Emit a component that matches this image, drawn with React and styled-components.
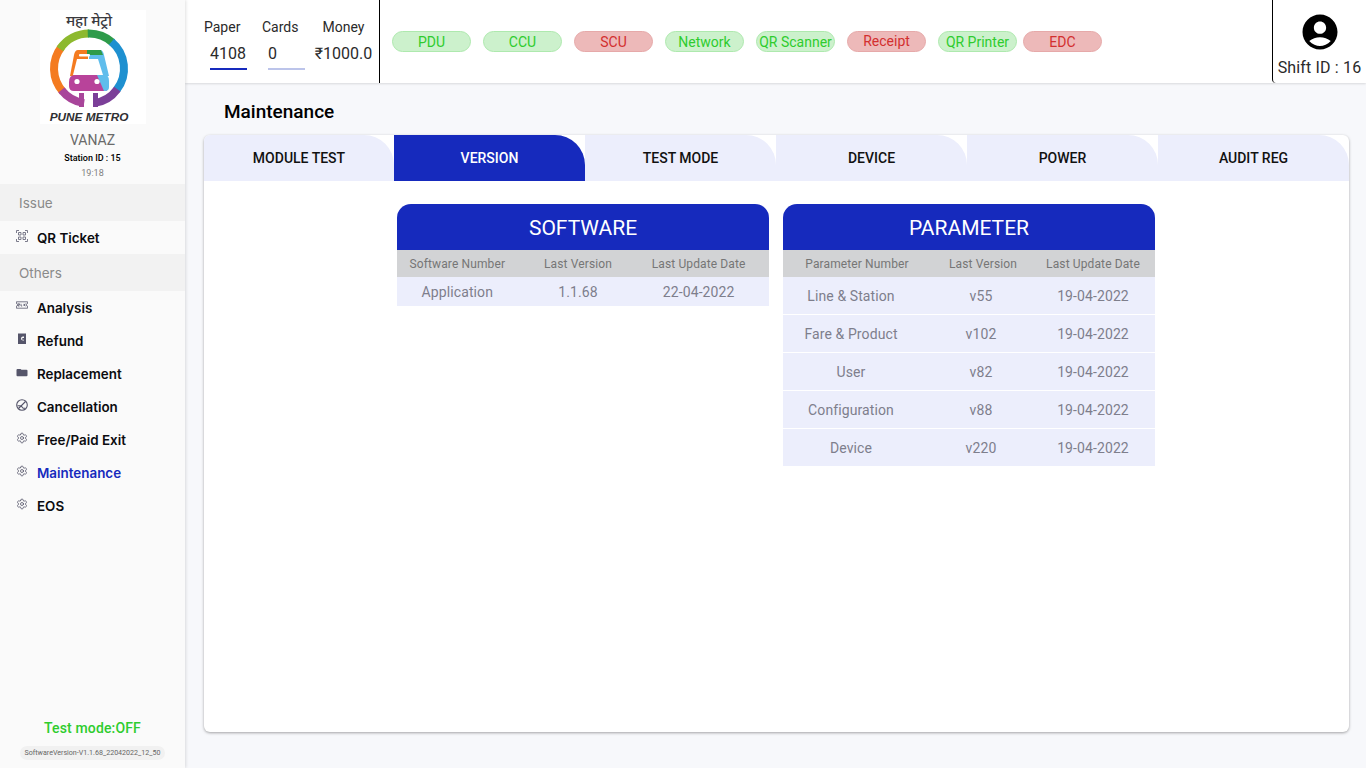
import React from "react";
import styled, { createGlobalStyle } from "styled-components";
import { Settings } from "lucide-react";

const GlobalStyle = createGlobalStyle`
  html, body {
    margin: 0;
    height: 100%;
    background: #f7f8fb;
    font-family: Roboto, "Liberation Sans", sans-serif;
  }
  #root {
    height: 100%;
  }
`;

const Page = styled.div`
  display: flex;
  width: 1366px;
  height: 768px;
  overflow: hidden;
`;

const Sidebar = styled.aside`
  width: 185px;
  flex: none;
  display: flex;
  flex-direction: column;
  background: #fafafa;
  box-shadow: 1px 0 3px rgba(0, 0, 0, 0.12);
  z-index: 2;
`;

const Brand = styled.div`
  height: 184px;
  padding-top: 10px;
  box-sizing: border-box;
  display: flex;
  flex-direction: column;
  align-items: center;
`;

const LogoSvg = styled.svg`
  width: 106px;
  height: 114px;
  background: #fff;
  flex: none;
`;

const StationName = styled.div`
  margin-top: 8px;
  font-size: 14px;
  line-height: 16px;
  color: #6a6a6a;
`;

const StationId = styled.div`
  margin-top: 4px;
  font-size: 9px;
  line-height: 12px;
  font-weight: 500;
  color: #000;
`;

const StationTime = styled.div`
  margin-top: 4px;
  font-size: 9px;
  line-height: 11px;
  color: #808080;
`;

const SectionLabel = styled.div`
  height: 37px;
  padding-left: 19px;
  display: flex;
  align-items: center;
  background: #f2f2f2;
  font-family: Inter, sans-serif;
  font-size: 13.5px;
  color: #8a8a8a;
`;

const MenuRow = styled.div`
  height: 33px;
  padding-left: 16px;
  display: flex;
  align-items: center;
  gap: 9px;
  font-family: Inter, sans-serif;
  font-size: 13.4px;
  font-weight: 600;
  color: ${(p) => (p.$active ? "#162abd" : "#0c0c10")};

  svg {
    width: 12px;
    height: 12px;
    flex: none;
    margin-top: -3px;
    color: #55556a;
  }
`;

const SideFooter = styled.div`
  margin-top: auto;
  padding-bottom: 8px;
  display: flex;
  flex-direction: column;
  align-items: center;
`;

const TestMode = styled.div`
  font-size: 14px;
  line-height: 18px;
  font-weight: 500;
  letter-spacing: 0.15px;
  color: #2ecc2e;
`;

const VersionChip = styled.div`
  margin-top: 9px;
  height: 14px;
  padding: 0 5px;
  border-radius: 7px;
  background: #f1f1f1;
  font-size: 7.1px;
  line-height: 14px;
  color: #666;
  white-space: nowrap;
`;

const Main = styled.main`
  flex: 1;
  min-width: 0;
  display: flex;
  flex-direction: column;
`;

const TopBar = styled.header`
  height: 83px;
  flex: none;
  display: flex;
  background: #fff;
  box-shadow: 0 1px 2px rgba(0, 0, 0, 0.12);
`;

const Stats = styled.div`
  width: 195px;
  box-sizing: border-box;
  padding: 19px 0 0 19px;
  display: grid;
  grid-template-columns: 58px 53px auto;
  border-right: 1px solid #000;
`;

const Stat = styled.div`
  display: flex;
  flex-direction: column;
  align-items: ${(p) => (p.$center ? "center" : "flex-start")};
  width: ${(p) => (p.$center ? "57px" : "auto")};
`;

const StatLabel = styled.div`
  font-size: 14px;
  line-height: 17px;
  color: #2a2a2a;
`;

const StatValue = styled.div`
  margin-top: 8px;
  margin-left: ${(p) => (p.$center ? "0" : "6px")};
  font-size: 16px;
  line-height: 19px;
  color: #2a2a2a;
`;

const StatBar = styled.div`
  width: 37px;
  height: 2px;
  margin: 5px 0 0 6px;
  background: ${(p) => p.$color};
`;

const Pills = styled.div`
  flex: 1;
  padding: 31px 0 0 12px;
  display: flex;
  align-items: flex-start;
  gap: 12px;
`;

const Pill = styled.div`
  width: 79px;
  height: 21px;
  box-sizing: border-box;
  flex: none;
  margin-left: ${(p) => (p.$tight ? "-6px" : "0")};
  border-radius: 11px;
  border: 1.5px solid ${(p) => (p.$ok ? "#aee9ae" : "#e6a9a9")};
  background: ${(p) => (p.$ok ? "#ccf1cc" : "#edb9b9")};
  color: ${(p) => (p.$ok ? "#2ecc2e" : "#d32f2f")};
  font-size: 14px;
  line-height: ${(p) => (p.$raised ? "18px" : "20px")};
  text-align: center;
  white-space: nowrap;
`;

const ShiftBox = styled.div`
  width: 94px;
  flex: none;
  box-sizing: border-box;
  border-left: 1px solid #000;
  padding-top: 11px;
  display: flex;
  flex-direction: column;
  align-items: center;
  border-radius: 0 0 4px 4px;
`;

const Avatar = styled.svg`
  width: 42px;
  height: 42px;
  fill: #000;
`;

const ShiftText = styled.div`
  margin-top: 5px;
  font-size: 16px;
  line-height: 19px;
  letter-spacing: 0.15px;
  color: #2a2a2a;
  white-space: nowrap;
`;

const Content = styled.div`
  flex: 1;
  min-height: 0;
  display: flex;
  flex-direction: column;
  padding: 0 17px 36px 19px;
`;

const PageTitle = styled.h1`
  margin: 0;
  height: 52px;
  padding: 18px 0 0 20px;
  box-sizing: border-box;
  font-size: 19px;
  line-height: 22px;
  font-weight: 500;
  color: #000;
`;

const Card = styled.section`
  flex: 1;
  min-height: 0;
  background: #fff;
  border-radius: 6px;
  overflow: hidden;
  box-shadow: 0 1px 3px rgba(0, 0, 0, 0.35);
`;

const Tabs = styled.div`
  display: grid;
  grid-template-columns: 190px repeat(5, 1fr);
  height: 46px;
`;

const Tab = styled.div`
  display: flex;
  align-items: center;
  justify-content: center;
  border-top-right-radius: 30px;
  background: ${(p) => (p.$active ? "#162abd" : "#eceefc")};
  color: ${(p) => (p.$active ? "#fff" : "#111")};
  font-size: 14px;
  font-weight: 500;
`;

const Tables = styled.div`
  display: flex;
  justify-content: center;
  align-items: flex-start;
  gap: 14px;
  padding: 23px 1px 0 0;
`;

const VersionTable = styled.div`
  width: 372px;
`;

const TableTitle = styled.div`
  height: 46px;
  border-radius: 14px 14px 0 0;
  background: #162abd;
  color: #fff;
  font-size: 21px;
  line-height: 49px;
  text-align: center;
`;

const HeadRow = styled.div`
  display: grid;
  grid-template-columns: ${(p) => p.$cols};
  padding-right: ${(p) => p.$pad};
  height: 27px;
  align-items: center;
  background: #d2d3d5;
  color: #767676;
  font-size: 12px;
  letter-spacing: 0.12px;
  text-align: center;
`;

const BodyRow = styled.div`
  display: grid;
  grid-template-columns: ${(p) => p.$cols};
  padding-right: ${(p) => p.$pad};
  height: ${(p) => p.$height};
  box-sizing: border-box;
  align-items: center;
  background: #eceefc;
  border-bottom: 1px solid #fff;
  color: #7e7e8c;
  font-size: 14px;
  letter-spacing: 0.1px;
  text-align: center;

  &:last-child {
    border-bottom: 0;
  }
`;

const polar = (r, deg) => {
  const a = ((deg - 90) * Math.PI) / 180;
  return `${(49 + r * Math.cos(a)).toFixed(2)} ${(58.5 + r * Math.sin(a)).toFixed(2)}`;
};
const arc = (from, to) => `M${polar(35, from)}A35 35 0 0 1 ${polar(35, to)}`;

function Logo() {
  return (
    <LogoSvg viewBox="0 0 106 114">
      <text x="49" y="16" textAnchor="middle" fontFamily="'Noto Sans', 'DejaVu Sans', sans-serif" fontSize="15" fontWeight="500" fill="#3a3a3e">
        महा मेट्रो
      </text>
      <g fill="none" strokeWidth="8">
        <path d={arc(228, 308)} stroke="#f47b20" />
        <path d={arc(304, 360)} stroke="#8db92e" />
        <path d={arc(358, 42)} stroke="#2e9b4a" />
        <path d={arc(40, 128)} stroke="#1e90d0" />
        <path d={arc(126, 172)} stroke="#7b3f98" />
        <path d={arc(188, 232)} stroke="#a8459a" />
      </g>
      <path d="M39 97V83h5v14z" fill="#a8459a" />
      <path d="M53 97V83h5v14z" fill="#7b3f98" />
      <path d="M38 40h10v26H30l4-21q1-5 4-5z" fill="#f47b20" />
      <path d="M49 40h11q3 0 4 5l5 21H49z" fill="#5fbdec" />
      <path d="M47 40h14l2 5H47z" fill="#2e9b4a" />
      <path d="M37 49h21l5 16H33z" fill="#fff" />
      <rect x="39" y="44" width="11" height="2.5" rx="1" fill="#fff" />
      <path d="M35 65h24l8 16H34q-5 0-5-5v-4q0-7 6-7z" fill="#b8439a" />
      <path d="M57 65h8q4 0 4 6v6q0 4-4 4h-1z" fill="#5fbdec" />
      <circle cx="37" cy="71.5" r="2.6" fill="#fff" />
      <circle cx="57" cy="71.5" r="2.6" fill="#fff" />
      <text x="49" y="111" textAnchor="middle" fontFamily="'Liberation Sans', sans-serif" fontSize="11.8" fontWeight="700" fontStyle="italic" fill="#2f2f33">
        PUNE METRO
      </text>
    </LogoSvg>
  );
}

const QrIcon = () => (
  <svg viewBox="0 0 12 12" fill="none" stroke="currentColor" strokeWidth="0.9" opacity="0.85">
    <path d="M.5 3V.5H3M9 .5h2.500V3M11.500 9v2.500H9M3 11.500H.5V9" />
    <path d="M2.500 2.500h2.500v2.500H2.500zM7 2.500h2.500v2.500H7zM2.500 7H5v2.500H2.500zM7 7h2.500v2.500H7z" />
  </svg>
);

const TicketIcon = () => (
  <svg viewBox="0 0 12 12" fill="none" stroke="currentColor" strokeWidth="0.8">
    <path d="M.4 1.800h11.200v1.700a1.300 1.300 0 0 0 0 2.600v2.100H.4V6.100a1.300 1.300 0 0 0 0-2.600z" />
    <path d="M2 3.800h1.500v1.100H2v1.100h1.500M5 3.800V6h1.200M8 3.800V6M9.600 3.800L8 5l1.600 1" />
  </svg>
);

const RefundIcon = () => (
  <svg viewBox="0 0 12 12" fill="currentColor">
    <path d="M2 .5h8v10.500H2zm5 3a2 2 0 1 0 0 4h1V6.800H7a.8.8 0 0 1 0-1.800h1V3.500z" fillRule="evenodd" />
  </svg>
);

const FolderIcon = () => (
  <svg viewBox="0 0 12 12" fill="currentColor">
    <path d="M.5 4q0-1 1-1h3l1 .8h5q1 0 1 1V9.200q0 1-1 1h-9q-1 0-1-1z" />
  </svg>
);

const BanIcon = () => (
  <svg viewBox="0 0 12 12" fill="none" stroke="currentColor" strokeWidth="1.100">
    <circle cx="6" cy="6" r="5.300" />
    <path d="M2.500 9.500l7-7M1.500 6.800h3.500l2.200 2.500h2" />
  </svg>
);

const GearIcon = () => <Settings strokeWidth={1.6} />;

const issueItems = [{ label: "QR Ticket", icon: <QrIcon /> }];

const otherItems = [
  { label: "Analysis", icon: <TicketIcon /> },
  { label: "Refund", icon: <RefundIcon /> },
  { label: "Replacement", icon: <FolderIcon /> },
  { label: "Cancellation", icon: <BanIcon /> },
  { label: "Free/Paid Exit", icon: <GearIcon /> },
  { label: "Maintenance", icon: <GearIcon />, active: true },
  { label: "EOS", icon: <GearIcon /> },
];

const devices = [
  { name: "PDU", ok: true },
  { name: "CCU", ok: true },
  { name: "SCU" },
  { name: "Network", ok: true },
  { name: "QR Scanner", ok: true },
  { name: "Receipt", raised: true },
  { name: "QR Printer", ok: true },
  { name: "EDC", tight: true },
];

const tabs = ["MODULE TEST", "VERSION", "TEST MODE", "DEVICE", "POWER", "AUDIT REG"];

const parameterRows = [
  ["Line & Station", "v55"],
  ["Fare & Product", "v102"],
  ["User", "v82"],
  ["Configuration", "v88"],
  ["Device", "v220"],
];

export default function App() {
  return (
    <Page>
      <GlobalStyle />
      <Sidebar>
        <Brand>
          <Logo />
          <StationName>VANAZ</StationName>
          <StationId>Station ID : 15</StationId>
          <StationTime>19:18</StationTime>
        </Brand>
        <SectionLabel>Issue</SectionLabel>
        {issueItems.map((item) => (
          <MenuRow key={item.label}>
            {item.icon}
            {item.label}
          </MenuRow>
        ))}
        <SectionLabel>Others</SectionLabel>
        {otherItems.map((item) => (
          <MenuRow key={item.label} $active={item.active}>
            {item.icon}
            {item.label}
          </MenuRow>
        ))}
        <SideFooter>
          <TestMode>Test mode:OFF</TestMode>
          <VersionChip>SoftwareVersion-V1.1.68_22042022_12_50</VersionChip>
        </SideFooter>
      </Sidebar>
      <Main>
        <TopBar>
          <Stats>
            <Stat>
              <StatLabel>Paper</StatLabel>
              <StatValue>4108</StatValue>
              <StatBar $color="#162abd" />
            </Stat>
            <Stat>
              <StatLabel>Cards</StatLabel>
              <StatValue>0</StatValue>
              <StatBar $color="#bcc4ea" />
            </Stat>
            <Stat $center>
              <StatLabel>Money</StatLabel>
              <StatValue $center>₹1000.0</StatValue>
            </Stat>
          </Stats>
          <Pills>
            {devices.map((d) => (
              <Pill key={d.name} $ok={d.ok} $raised={d.raised} $tight={d.tight}>
                {d.name}
              </Pill>
            ))}
          </Pills>
          <ShiftBox>
            <Avatar viewBox="0 0 24 24">
              <path d="M12 2C6.480 2 2 6.480 2 12s4.480 10 10 10 10-4.480 10-10S17.520 2 12 2zm0 4c1.930 0 3.500 1.570 3.500 3.500S13.930 13 12 13s-3.500-1.570-3.500-3.500S10.070 6 12 6zm0 14c-2.030 0-4.430-.820-6.140-2.880C7.550 15.800 9.680 15 12 15s4.450.800 6.140 2.120C16.430 19.180 14.030 20 12 20z" />
            </Avatar>
            <ShiftText>Shift ID : 16</ShiftText>
          </ShiftBox>
        </TopBar>
        <Content>
          <PageTitle>Maintenance</PageTitle>
          <Card>
            <Tabs>
              {tabs.map((t) => (
                <Tab key={t} $active={t === "VERSION"}>
                  {t}
                </Tab>
              ))}
            </Tabs>
            <Tables>
              <VersionTable>
                <TableTitle>SOFTWARE</TableTitle>
                <HeadRow $cols="repeat(3, 1fr)" $pad="10px">
                  <span>Software Number</span>
                  <span>Last Version</span>
                  <span>Last Update Date</span>
                </HeadRow>
                <BodyRow $cols="repeat(3, 1fr)" $pad="10px" $height="29px">
                  <span>Application</span>
                  <span>1.1.68</span>
                  <span>22-04-2022</span>
                </BodyRow>
              </VersionTable>
              <VersionTable>
                <TableTitle>PARAMETER</TableTitle>
                <HeadRow $cols="148px 104px 116px" $pad="4px">
                  <span>Parameter Number</span>
                  <span>Last Version</span>
                  <span>Last Update Date</span>
                </HeadRow>
                {parameterRows.map(([name, version], i) => (
                  <BodyRow
                    key={name}
                    $cols="136px 124px 100px"
                    $pad="12px"
                    $height={i === parameterRows.length - 1 ? "37px" : "38px"}
                  >
                    <span>{name}</span>
                    <span>{version}</span>
                    <span>19-04-2022</span>
                  </BodyRow>
                ))}
              </VersionTable>
            </Tables>
          </Card>
        </Content>
      </Main>
    </Page>
  );
}
